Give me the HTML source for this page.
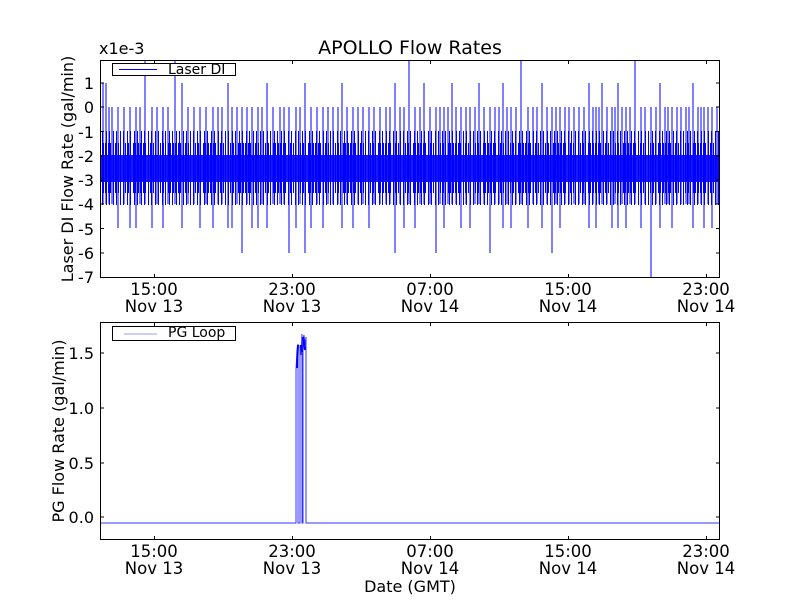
<!DOCTYPE html>
<html><head><style>
html,body{margin:0;padding:0;background:#fff;width:800px;height:600px;overflow:hidden}
svg text{font-family:"DejaVu Sans","Liberation Sans",sans-serif;fill:#000}
</style></head><body>
<svg width="800" height="600" xmlns="http://www.w3.org/2000/svg">
<defs>
<pattern id="s1" width="5" height="10" patternUnits="userSpaceOnUse"><rect x="0" width="1" height="10" fill="#00f"/><rect x="3" width="1" height="10" fill="#00f"/></pattern>
<pattern id="s2" width="7" height="10" patternUnits="userSpaceOnUse"><rect x="1" width="1" height="10" fill="#00f"/><rect x="4" width="1" height="10" fill="#00f"/></pattern>
<clipPath id="c1"><rect x="100" y="60" width="620" height="218"/></clipPath>
</defs>
<text x="410" y="54" font-size="19" text-anchor="middle">APOLLO Flow Rates</text>
<text x="99" y="54" font-size="16">x1e-3</text>
<g clip-path="url(#c1)">
<rect x="101" y="131" width="618" height="74" fill="url(#s2)"/>
<rect x="101" y="143" width="618" height="50" fill="url(#s1)"/>
<rect x="101" y="155" width="618" height="27" fill="#00f" opacity="0.9"/>
<path stroke="#00f" stroke-width="1" fill="none" d="M103 83V204M106 83V204M118 107V228M130 107V228M145 60V204M152 107V228M175 60V204M182 83V228M188 107V204M200 107V228M213 107V228M228 83V228M232 107V228M242 107V253M258 107V228M267 83V228M273 107V204M289 107V253M296 107V228M305 83V253M311 107V228M323 107V228M333 107V204M342 83V228M353 107V228M369 107V228M380 107V204M395 83V253M409 60V204M415 107V228M424 83V204M436 107V253M444 107V228M452 83V204M461 107V228M470 107V228M479 83V204M490 107V253M503 83V228M511 107V228M521 60V204M528 107V228M542 83V228M552 107V253M560 107V228M574 107V204M589 83V228M596 107V228M602 83V204M612 107V228M618 83V228M626 107V228M635 60V204M641 107V228M651 107V277M660 83V228M672 107V228M681 107V204M693 83V228M704 107V228M712 107V228M717 107V204"/>
<path stroke="#00f" stroke-width="1" fill="none" d="M109 107V204M112 107V204M124 107V204M136 107V228M140 107V204M157 107V204M163 107V228M168 107V204M194 107V204M206 107V204M218 107V204M222 107V204M237 107V204M247 107V204M252 107V228M262 107V204M280 107V204M284 107V204M300 107V204M317 107V204M328 107V204M338 107V204M347 107V204M358 107V204M363 107V204M374 107V204M386 107V204M390 107V204M400 107V204M404 107V228M420 107V204M430 107V204M440 107V204M448 107V204M456 107V204M466 107V204M475 107V204M484 107V204M495 107V204M499 107V204M507 107V204M516 107V204M533 107V204M537 107V204M547 107V204M556 107V204M565 107V204M569 107V204M579 107V204M584 107V204M593 107V204M599 107V204M607 107V204M615 107V204M622 107V204M630 107V204M645 107V204M656 107V204M665 107V204M668 107V204M677 107V204M686 107V204M689 107V204M698 107V204M701 107V204M708 107V204"/>
</g>
<rect x="100.5" y="60.5" width="619" height="217" fill="none" stroke="#000"/>
<rect x="112.5" y="63.5" width="123" height="12" fill="#fff" stroke="#000"/>
<line x1="119" y1="69.5" x2="157" y2="69.5" stroke="#00f"/>
<text x="168" y="74" font-size="14">Laser DI</text>
<g font-size="16" text-anchor="end">
<text x="94" y="89">1</text><text x="94" y="113">0</text><text x="94" y="138">-1</text><text x="94" y="162">-2</text><text x="94" y="186">-3</text><text x="94" y="210">-4</text><text x="94" y="235">-5</text><text x="94" y="259">-6</text><text x="94" y="283">-7</text>
</g>
<g stroke="#000">
<path d="M100 83h4M100 107h4M100 131.5h4M100 156h4M100 180h4M100 204h4M100 228.5h4M100 253h4M716 83h4M716 107h4M716 131.5h4M716 156h4M716 180h4M716 204h4M716 228.5h4M716 253h4"/>
<path d="M154.5 278v-4M292.5 278v-4M430.5 278v-4M568.5 278v-4M706.5 278v-4M154.5 60v4M292.5 60v4M430.5 60v4M568.5 60v4M706.5 60v4"/>
</g>
<g font-size="16.5" text-anchor="middle">
<text x="154" y="295">15:00</text><text x="154" y="312">Nov 13</text>
<text x="292" y="295">23:00</text><text x="292" y="312">Nov 13</text>
<text x="430" y="295">07:00</text><text x="430" y="312">Nov 14</text>
<text x="568" y="295">15:00</text><text x="568" y="312">Nov 14</text>
<text x="706" y="295">23:00</text><text x="706" y="312">Nov 14</text>
</g>
<text transform="translate(73,169) rotate(-90)" font-size="16" text-anchor="middle">Laser DI Flow Rate (gal/min)</text>
<path stroke="#33f" stroke-width="1" fill="none" d="M101 523H296V370L297 350L298 344V523H300V345L301 355L302 334V523H303V340L304 335L305 345L306 337V523H719"/>
<path stroke="#00f" stroke-width="2" fill="none" d="M297 368L298 345M301 345L302 352M303 337L305 350"/>
<rect x="100.5" y="322.5" width="619" height="217" fill="none" stroke="#000"/>
<rect x="112.5" y="326.5" width="123" height="14" fill="#fff" stroke="#000"/>
<line x1="124" y1="334" x2="157" y2="334" stroke="#99f"/>
<text x="168" y="337" font-size="14">PG Loop</text>
<g font-size="16" text-anchor="end">
<text x="94" y="359">1.5</text><text x="94" y="414">1.0</text><text x="94" y="469">0.5</text><text x="94" y="523">0.0</text>
</g>
<g stroke="#000">
<path d="M100 353h4M100 408h4M100 463h4M100 517h4M716 353h4M716 408h4M716 463h4M716 517h4"/>
<path d="M154.5 540v-4M292.5 540v-4M430.5 540v-4M568.5 540v-4M706.5 540v-4M154.5 322v4M292.5 322v4M430.5 322v4M568.5 322v4M706.5 322v4"/>
</g>
<g font-size="16.5" text-anchor="middle">
<text x="154" y="557">15:00</text><text x="154" y="574">Nov 13</text>
<text x="292" y="557">23:00</text><text x="292" y="574">Nov 13</text>
<text x="430" y="557">07:00</text><text x="430" y="574">Nov 14</text>
<text x="568" y="557">15:00</text><text x="568" y="574">Nov 14</text>
<text x="706" y="557">23:00</text><text x="706" y="574">Nov 14</text>
</g>
<text x="410" y="592" font-size="16" text-anchor="middle">Date (GMT)</text>
<text transform="translate(64,431) rotate(-90)" font-size="16" text-anchor="middle">PG Flow Rate (gal/min)</text>
</svg>
</body></html>
